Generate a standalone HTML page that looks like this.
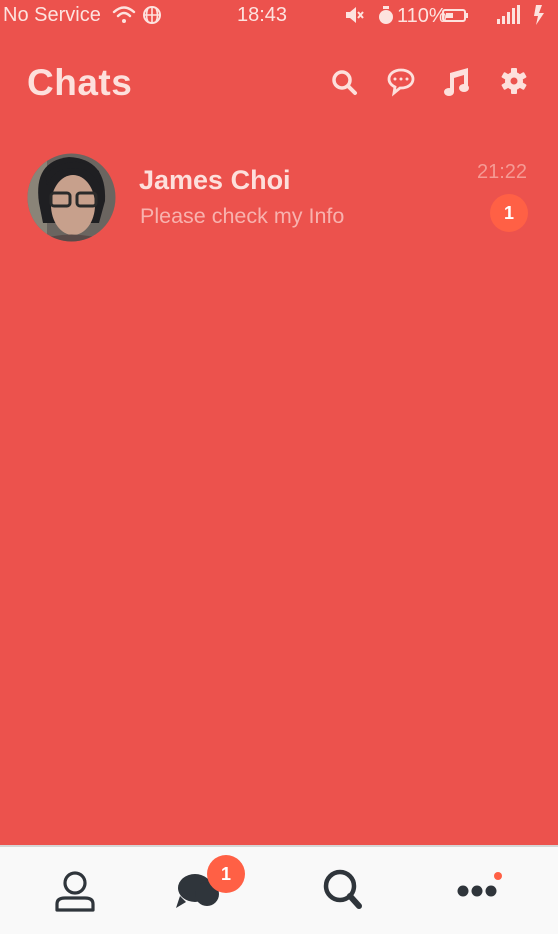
<!DOCTYPE html>
<html><head><style>
*{margin:0;padding:0;box-sizing:border-box}
body{width:558px;height:934px;background:#ec524d;font-family:"Liberation Sans",sans-serif;position:relative;overflow:hidden;color:#fde0dc}
.a{position:absolute}
</style></head><body>
<div class="a" style="left:3px;top:4px;font-size:20px;color:#fde3df">No Service</div>
<svg class="a" style="left:112px;top:4px" width="56" height="22" viewBox="0 0 56 22" fill="none" stroke="#fde3df" stroke-width="2.4" stroke-linecap="round">
<path d="M2 8 Q12 -1 22 8"/><path d="M6 12 Q12 6 18 12"/><circle cx="12" cy="17" r="2" fill="#fde3df" stroke="none"/>
<circle cx="40" cy="11" r="8" stroke-width="2"/><path d="M32 11H48M40 3V19M36 4Q33 11 36 18M44 4Q47 11 44 18" stroke-width="1.6"/></svg>
<div class="a" style="left:237px;top:4px;font-size:20px;color:#fde3df">18:43</div>
<svg class="a" style="left:344px;top:4px" width="210" height="22" viewBox="0 0 210 22" fill="#fde3df">
<path d="M2 8h4l6-5v16l-6-5H2z"/><path d="M14 8l5 6M19 8l-5 6" stroke="#fde3df" stroke-width="2"/>
<circle cx="42" cy="13" r="7"/><rect x="39" y="2" width="6" height="3"/>
<text x="53" y="18" font-size="20" font-family="Liberation Sans">110%</text>
<rect x="99" y="6" width="22" height="11" rx="2" fill="none" stroke="#fde3df" stroke-width="2"/><rect x="102" y="9" width="7" height="5"/><rect x="122" y="9" width="2" height="5"/>
<rect x="153" y="15" width="3" height="5"/><rect x="158" y="12" width="3" height="8"/><rect x="163" y="8" width="3" height="12"/><rect x="168" y="4" width="3" height="16"/><rect x="173" y="1" width="3" height="19"/>
<path d="M192 1h6l-3 8h5l-8 12 2-9h-4z"/></svg>
<div class="a" style="left:27px;top:62px;font-size:37px;font-weight:bold;color:#fde0dc;letter-spacing:0.5px">Chats</div>
<svg class="a" style="left:328px;top:66px" width="205" height="34" viewBox="0 0 205 34" fill="none" stroke="#fde0dc">
<circle cx="14" cy="14" r="8" stroke-width="3.5"/><path d="M20 20l7 7" stroke-width="4" stroke-linecap="round"/>
<path d="M73 4c7 0 12 4 12 9s-5 9-12 9h-1l-6 5 1-6c-4-2-6-5-6-8 0-5 5-9 12-9z" stroke-width="2.8"/>
<circle cx="67" cy="13" r="1.5" fill="#fde0dc" stroke="none"/><circle cx="73" cy="13" r="1.5" fill="#fde0dc" stroke="none"/><circle cx="79" cy="13" r="1.5" fill="#fde0dc" stroke="none"/>
<g fill="#fde0dc" stroke="none"><path d="M122 7l18-5v20h-4V9l-10 3v14h-4z"/><ellipse cx="121" cy="26" rx="5" ry="4"/><ellipse cx="136" cy="22" rx="5" ry="4"/></g>
<g transform="translate(186 15)" fill="#fde0dc" stroke="none"><circle r="9"/>
<rect x="-3" y="-13" width="6" height="26" rx="1"/><rect x="-3" y="-13" width="6" height="26" rx="1" transform="rotate(60)"/><rect x="-3" y="-13" width="6" height="26" rx="1" transform="rotate(120)"/>
<circle r="3.5" fill="#ec524d"/></g>
</svg>
<svg class="a" style="left:27px;top:153px" width="89" height="89" viewBox="0 0 89 89">
<defs><clipPath id="c"><circle cx="44.5" cy="44.5" r="44"/></clipPath></defs>
<g clip-path="url(#c)"><rect width="89" height="89" fill="#6b6560"/><rect x="0" y="0" width="20" height="89" fill="#8a8478"/>
<path d="M12 50Q6 8 42 4Q80 6 78 48L72 70H16z" fill="#1f1f22"/>
<ellipse cx="46" cy="52" rx="22" ry="30" fill="#c7a08c"/>
<path d="M20 32Q30 12 46 16Q62 12 74 34L72 18Q46 -2 18 22z" fill="#1f1f22"/>
<rect x="24" y="40" width="19" height="13" rx="3" fill="none" stroke="#2a2a2a" stroke-width="3"/><rect x="50" y="40" width="19" height="13" rx="3" fill="none" stroke="#2a2a2a" stroke-width="3"/>
<path d="M6 89Q44 74 84 89" fill="#5a4a48"/></g></svg>
<div class="a" style="left:139px;top:165px;font-size:27px;font-weight:bold;color:#fde0dc">James Choi</div>
<div class="a" style="left:140px;top:204px;font-size:21.5px;color:#f8b2ae">Please check my Info</div>
<div class="a" style="left:477px;top:161px;font-size:20px;color:#f59a94">21:22</div>
<div class="a" style="left:490px;top:194px;width:38px;height:38px;border-radius:50%;background:#ff6045;color:#fff;font-weight:bold;font-size:18px;text-align:center;line-height:38px">1</div>
<div class="a" style="left:0;top:845px;width:558px;height:89px;background:#f9f9f9;border-top:2px solid #d6d6d6"></div>
<svg class="a" style="left:0;top:846px" width="558" height="88" viewBox="0 0 558 88" fill="none" stroke="#2f353b" stroke-width="3.2">
<circle cx="75" cy="37" r="10"/><path d="M57 64v-6q0-6 8-6h20q8 0 8 6v6z" stroke-linejoin="round"/>
<g fill="#2f353b" stroke="none"><ellipse cx="195" cy="42" rx="17" ry="14"/><path d="M180 50l-4 12 10-6z"/><ellipse cx="207" cy="48" rx="12" ry="12"/></g>
<circle cx="340" cy="40" r="14" stroke-width="4.5"/><path d="M350 50l9 10" stroke-width="6" stroke-linecap="round"/>
<g fill="#2f353b" stroke="none"><circle cx="463" cy="45" r="5.5"/><circle cx="477" cy="45" r="5.5"/><circle cx="491" cy="45" r="5.5"/></g>
<circle cx="498" cy="30" r="4" fill="#ff6045" stroke="none"/>
</svg>
<div class="a" style="left:207px;top:855px;width:38px;height:38px;border-radius:50%;background:#ff6045;color:#fff;font-weight:bold;font-size:18px;text-align:center;line-height:38px">1</div>
</body></html>
